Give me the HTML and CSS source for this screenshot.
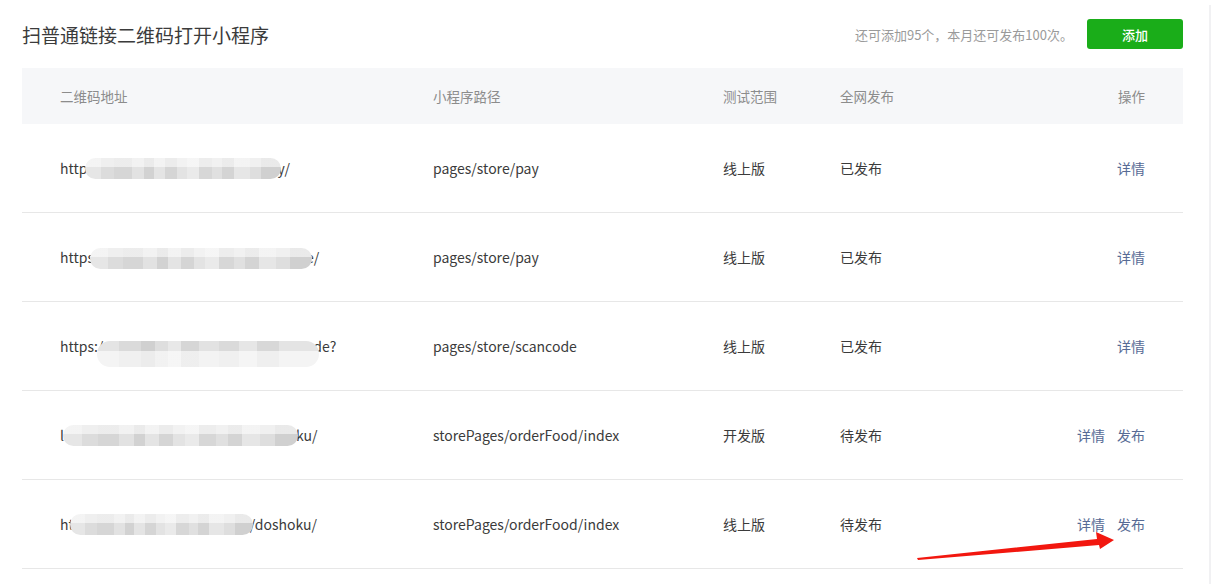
FILE: index.html
```html
<!DOCTYPE html>
<html lang="zh-CN">
<head>
<meta charset="utf-8">
<title>扫普通链接二维码打开小程序</title>
<link rel="stylesheet" href="styles.css">
</head>
<body>
<div class="page">
  <div class="top">
    <h1 class="title">扫普通链接二维码打开小程序</h1>
    <div class="top-right">
      <span class="note">还可添加95个，本月还可发布100次。</span>
      <button class="btn-add">添加</button>
    </div>
  </div>
  <div class="table">
    <div class="row head">
      <div>二维码地址</div>
      <div>小程序路径</div>
      <div>测试范围</div>
      <div>全网发布</div>
      <div class="ops">操作</div>
    </div>
    <div class="row">
      <div class="url">http<span class="mask m1"></span>y/</div>
      <div>pages/store/pay</div>
      <div>线上版</div>
      <div>已发布</div>
      <div class="ops"><a class="link">详情</a></div>
    </div>
    <div class="row">
      <div class="url">https<span class="mask m2"></span>e/</div>
      <div>pages/store/pay</div>
      <div>线上版</div>
      <div>已发布</div>
      <div class="ops"><a class="link">详情</a></div>
    </div>
    <div class="row">
      <div class="url">https:/<span class="mask m3"></span>de?</div>
      <div>pages/store/scancode</div>
      <div>线上版</div>
      <div>已发布</div>
      <div class="ops"><a class="link">详情</a></div>
    </div>
    <div class="row">
      <div class="url">l<span class="mask m4"></span>ku/</div>
      <div>storePages/orderFood/index</div>
      <div>开发版</div>
      <div>待发布</div>
      <div class="ops"><a class="link">详情</a><a class="link">发布</a></div>
    </div>
    <div class="row">
      <div class="url">ht<span class="mask m5"></span>/doshoku/</div>
      <div>storePages/orderFood/index</div>
      <div>线上版</div>
      <div>待发布</div>
      <div class="ops"><a class="link">详情</a><a class="link">发布</a></div>
    </div>
  </div>
  <svg class="arrow" width="210" height="40" viewBox="0 0 210 40">
    <polygon fill="#f2170f" points="1,31 181,12 180,5 198,13 184,22 183,18 2,33"/>
  </svg>
</div>
</body>
</html>
```
FILE: styles.css
```css
html, body {
  margin: 0;
  padding: 0;
  background: #fff;
}
body {
  font-family: "Noto Sans CJK SC", "Noto Sans", sans-serif;
  color: #3b3b3b;
}
.page {
  position: relative;
  width: 1211px;
  margin-top: 5px;
  min-height: 579px;
  border-right: 2px solid #f1f1f3;
  padding: 14px 0 0 22px;
  box-sizing: border-box;
}
.top {
  width: 1161px;
  height: 30px;
  display: flex;
  align-items: center;
  justify-content: space-between;
  margin-bottom: 19px;
}
.title {
  margin: 0;
  font-size: 19px;
  font-weight: normal;
  color: #3b3b3b;
}
.top-right {
  display: flex;
  align-items: center;
}
.note {
  font-size: 13px;
  color: #9a9a9a;
  margin-right: 14px;
}
.btn-add {
  width: 96px;
  height: 30px;
  border: 0;
  border-radius: 3px;
  background: #1aad19;
  color: #fff;
  font-family: inherit;
  font-size: 13px;
  font-weight: 500;
  padding: 0;
}
.table {
  width: 1161px;
}
.row {
  display: grid;
  grid-template-columns: 373px 290px 117px 1fr auto;
  align-items: center;
  height: 88px;
  padding: 0 38px;
  border-bottom: 1px solid #e7e7e7;
  font-size: 14px;
  color: #3b3b3b;
}
.row.head {
  height: 56px;
  background: #f6f7f9;
  border-bottom: 0;
  color: #8c8c8c;
  font-size: 13.5px;
}
.ops {
  display: flex;
  gap: 12px;
  justify-content: flex-end;
}
.link {
  color: #576b95;
  cursor: pointer;
}
.url {
  display: flex;
  align-items: center;
  white-space: nowrap;
}
.mask {
  display: inline-block;
  height: 21px;
  border-radius: 11px;
  filter: blur(0.6px);
  background:
    linear-gradient(to bottom, rgba(255,255,255,0.55) 0 42%, rgba(255,255,255,0) 42%),
    linear-gradient(90deg,
      #e6e6e6 0 8%, #dcdcdc 8% 15%, #d6d6d6 15% 24%, #e2e2e2 24% 30%,
      #d2d2d2 30% 35%, #e4e4e4 35% 41%, #d5d5d5 41% 47%, #e3e3e3 47% 52%,
      #eaeaea 52% 58%, #d7d7d7 58% 65%, #e0e0e0 65% 70%, #d4d4d4 70% 76%,
      #e6e6e6 76% 84%, #dedede 84% 90%, #d0d0d0 90% 100%);
}
.m1 { width: 196px; margin: 0 -4px 0 -2px; }
.m2 { width: 222px; margin: 2px -6px 0 -4px; }
.m3 { width: 222px; margin: 16px -6px 0 -6px; height: 26px; border-radius: 13px; }
.m4 { width: 235px; margin: 0 -2px 0 -1px; }
.m5 { width: 183px; margin: 0 -3px 0 -4px; }
.m3 {
  background:
    linear-gradient(to bottom, rgba(0,0,0,0) 0 40%, rgba(255,255,255,0.6) 40%),
    linear-gradient(90deg,
      #e4e4e4 0 10%, #dadada 10% 20%, #d0d0d0 20% 26%, #dedede 26% 32%,
      #e8e8e8 32% 38%, #d6d6d6 38% 46%, #e2e2e2 46% 55%, #dadada 55% 64%,
      #e6e6e6 64% 72%, #d8d8d8 72% 82%, #e4e4e4 82% 100%);
}
.arrow {
  position: absolute;
  left: 916px;
  top: 522px;
}
```
